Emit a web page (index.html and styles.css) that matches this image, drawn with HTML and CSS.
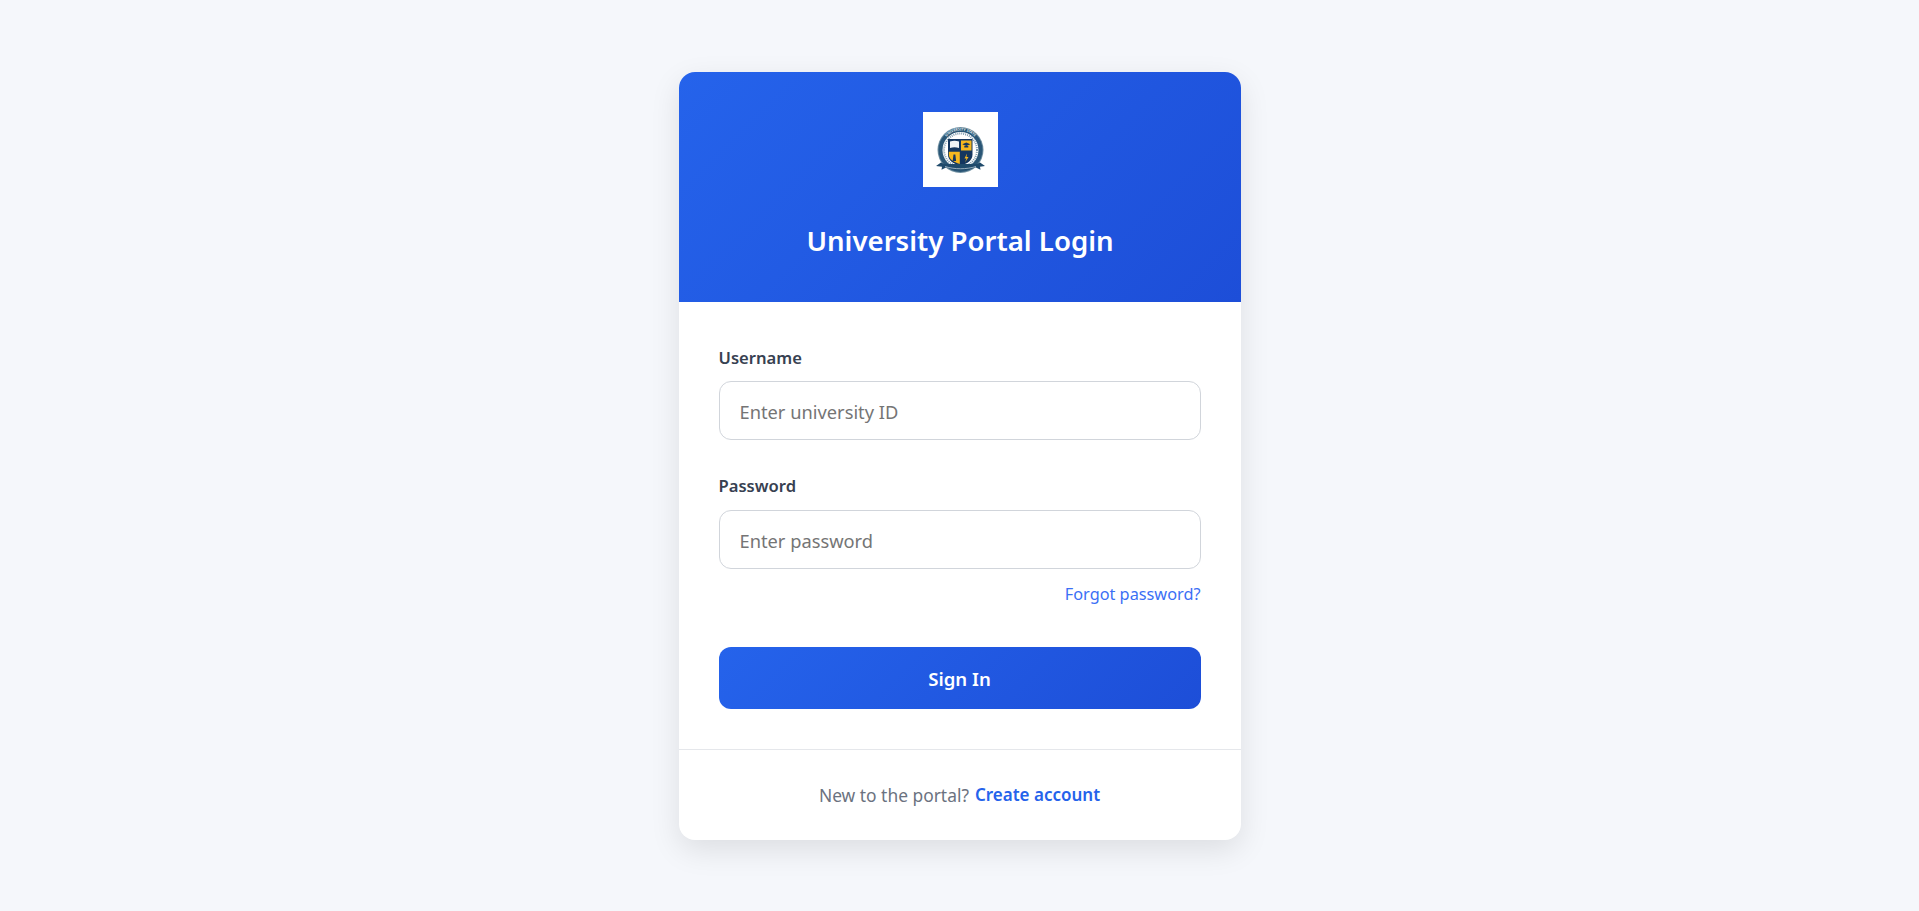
FILE: index.html
```html
<!DOCTYPE html>
<html lang="en">
<head>
    <meta charset="UTF-8">
    <meta name="viewport" content="width=device-width, initial-scale=1.0">
    <title>University Portal Login</title>
    <link rel="stylesheet" href="styles.css">
</head>
<body>
    <div class="login-card">
        <div class="card-header">
            <div class="logo">
                <!-- University crest -->
                <svg width="75" height="75" viewBox="0 0 75 75">
                    <circle cx="37.5" cy="38" r="23" fill="#6f8fa1"/>
                    <circle cx="37.5" cy="38" r="22" fill="#2a5676"/>
                    <path id="ring-top" d="M18 38a19.500 19.500 0 0 1 39 0" fill="none"/>
                    <text class="ring-text"><textPath href="#ring-top" startOffset="50%" text-anchor="middle">UNIVERSITY STATE</textPath></text>
                    <circle cx="37.5" cy="38" r="18" fill="#ffffff"/>
                    <circle cx="37.5" cy="38" r="16.5" fill="none" stroke="#7f9bad" stroke-width="2" stroke-dasharray="1 1"/>
                    <path d="M25 27h24.500v15.500c0 6-5.500 9.500-12.200 11C30.500 52 25 48.500 25 42.500z" fill="#14365f"/>
                    <path d="M38 28.500H48.500V38.500H38zM25.800 39.800H36.800V52C30.500 50 25.800 47 25.800 42.500z" fill="#f5b71f"/>
                    <path d="M27 29.500c3-1 6-1 9 0V36c-3-1-6-1-9 0z" fill="#eef2f5"/>
                    <path d="M43.300 30.500l4 1.800-4 1.800-4-1.800zM41.300 34h4v1.500h-4z" fill="#14365f"/>
                    <path d="M30.500 42.500h1.800l.8 6.500h-3.400z" fill="#14365f"/>
                    <path d="M44 41.500l-2.500 5h2l-1.500 4 3.500-5.500h-2z" fill="#f5b71f"/>
                    <path d="M13 54l5-3.500 3 1.500h33l3-1.500 5 3.500-5 .8.500 3-5-2.500c-9 4-19 4-29 0l-5 2.500.500-3z" fill="#1f4a6b"/>
                    <path d="M22 54.500c10 3 21 3 31 0" fill="none" stroke="#b8c8d2" stroke-width=".8"/>
                </svg>
            </div>
            <h1>University Portal Login</h1>
        </div>
        <form class="login-form">
            <div class="form-group">
                <label for="username">Username</label>
                <input type="text" id="username" placeholder="Enter university ID">
            </div>
            <div class="form-group">
                <label for="password" class="label-password">Password</label>
                <input type="password" id="password" placeholder="Enter password">
            </div>
            <div class="forgot-row">
                <a href="#" class="forgot-link">Forgot password?</a>
            </div>
            <button type="button" class="sign-in-btn">Sign In</button>
        </form>
        <div class="card-footer">
            New to the portal? <a href="#" class="create-link">Create account</a>
        </div>
    </div>
</body>
</html>
```

FILE: styles.css
```css
* {
    box-sizing: border-box;
}

body {
    font-family: "Noto Sans", Arial, sans-serif;
    margin: 0;
    padding: 0;
    min-height: 100vh;
    background-color: #f5f7fb;
    display: flex;
    align-items: center;
    justify-content: center;
}

.login-card {
    width: 562px;
    background-color: #ffffff;
    border-radius: 16px;
    overflow: hidden;
    box-shadow: 0 10px 30px rgba(0, 0, 0, 0.1);
}

.card-header {
    height: 230px;
    padding: 40px 0 0 1px;
    background: linear-gradient(135deg, #2563eb, #1d4ed8);
    text-align: center;
}

.logo {
    width: 75px;
    height: 75px;
    margin: 0 auto 33px;
    background-color: #ffffff;
}

.logo svg {
    display: block;
}

.ring-text {
    font-size: 3.5px;
    font-weight: 700;
    fill: #dfe7ec;
}

h1 {
    margin: 0;
    font-size: 27.6px;
    line-height: 40px;
    font-weight: 600;
    color: #ffffff;
}

.login-form {
    padding: 41px 40px 40px;
}

.form-group {
    margin-bottom: 31px;
}

.form-group label {
    display: block;
    margin-bottom: 9px;
    font-size: 16.6px;
    line-height: 29px;
    font-weight: 600;
    color: #374151;
}

.form-group .label-password {
    margin-bottom: 10px;
}

.form-group input {
    display: block;
    width: 100%;
    height: 59px;
    padding: 2px 20px 0;
    font-family: inherit;
    font-size: 18.3px;
    color: #374151;
    border: 1px solid #d1d5db;
    border-radius: 12px;
    outline: none;
}

.form-group input::placeholder {
    color: #757575;
}

.forgot-row {
    margin-top: -18px;
    text-align: right;
    line-height: 24px;
}

.forgot-link {
    font-size: 16.3px;
    color: #3b6ff5;
    text-decoration: none;
}

.sign-in-btn {
    display: block;
    width: 100%;
    height: 62px;
    margin-top: 41px;
    padding-top: 2px;
    font-family: inherit;
    font-size: 18.6px;
    font-weight: 600;
    color: #ffffff;
    background: linear-gradient(135deg, #2563eb, #1d4ed8);
    border: none;
    border-radius: 12px;
}

.card-footer {
    height: 91px;
    display: flex;
    align-items: center;
    justify-content: center;
    gap: 6px;
    border-top: 1px solid #e5e7eb;
    font-size: 17.4px;
    color: #6b7280;
}

.create-link {
    font-size: 17px;
    font-weight: 600;
    color: #2563eb;
    text-decoration: none;
}
```
